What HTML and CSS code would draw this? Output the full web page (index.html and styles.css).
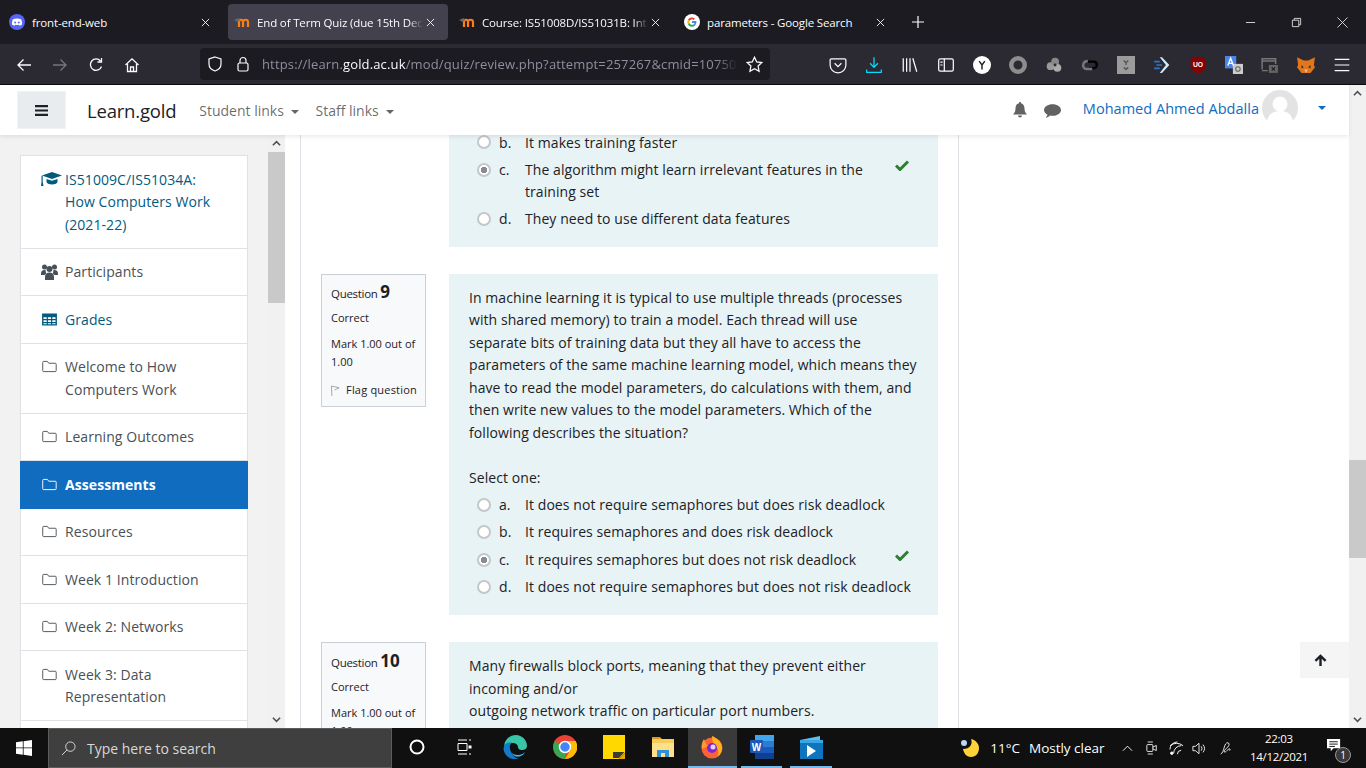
FILE: index.html
```html
<!DOCTYPE html>
<html lang="en">
<head>
<meta charset="utf-8">
<title>End of Term Quiz</title>
<link rel="stylesheet" href="styles.css">
</head>
<body>
<div class="tabbar">
  <div class="tab">
    <svg class="fav" viewBox="0 0 16 16"><circle cx="8" cy="8" r="8" fill="#5865f2"/><path d="M4 5.300c2.400-1.200 5.600-1.200 8 0 .9 1.800 1.200 3.600 1 5.200-1 .8-1.800 1.100-2.500 1.200l-.6-1c-1.200.3-2.600.3-3.800 0l-.6 1c-.7-.1-1.500-.4-2.500-1.200-.2-1.600.1-3.400 1-5.200z" fill="#fff"/><circle cx="6.200" cy="8.400" r="1" fill="#5865f2"/><circle cx="9.800" cy="8.400" r="1" fill="#5865f2"/></svg>
    <span class="tab-title">front-end-web</span>
    <svg class="tab-x" viewBox="0 0 10 10"><path d="M1 1l8 8M9 1l-8 8"/></svg>
  </div>
  <div class="tab tab-active">
    <svg class="fav" viewBox="0 0 16 16"><path d="M5 13V8c0-3 4-3 4 0v5M9 13V8c0-3 5-3 5 0v5" fill="none" stroke="#f98012" stroke-width="2.200"/><path d="M0 6l5-2 1 2-2 2z" fill="#6b6b6b"/></svg>
    <span class="tab-title tab-fade">End of Term Quiz (due 15th Dec</span>
    <svg class="tab-x" viewBox="0 0 10 10"><path d="M1 1l8 8M9 1l-8 8"/></svg>
  </div>
  <div class="tab">
    <svg class="fav" viewBox="0 0 16 16"><path d="M5 13V8c0-3 4-3 4 0v5M9 13V8c0-3 5-3 5 0v5" fill="none" stroke="#f98012" stroke-width="2.200"/><path d="M0 6l5-2 1 2-2 2z" fill="#6b6b6b"/></svg>
    <span class="tab-title tab-fade">Course: IS51008D/IS51031B: Intro</span>
    <svg class="tab-x" viewBox="0 0 10 10"><path d="M1 1l8 8M9 1l-8 8"/></svg>
  </div>
  <div class="tab">
    <svg class="fav" viewBox="0 0 16 16"><circle cx="8" cy="8" r="8" fill="#fff"/><path d="M8 3.500a4.500 4.500 0 0 1 3 1.200l-1.300 1.300A2.700 2.700 0 0 0 5.500 7L3.900 5.800A4.500 4.500 0 0 1 8 3.500z" fill="#ea4335"/><path d="M3.900 5.800L5.500 7a2.700 2.700 0 0 0 0 2L3.900 10.200a4.500 4.500 0 0 1 0-4.400z" fill="#fbbc05"/><path d="M3.900 10.200L5.500 9a2.700 2.700 0 0 0 4.100 1.300l1.500 1.200A4.500 4.500 0 0 1 3.900 10.200z" fill="#34a853"/><path d="M8 7.100h4.400c.2 1.700-.3 3.300-1.300 4.400L9.600 10.300c.5-.4.800-.8 1-1.400H8z" fill="#4285f4"/></svg>
    <span class="tab-title">parameters - Google Search</span>
    <svg class="tab-x" viewBox="0 0 10 10"><path d="M1 1l8 8M9 1l-8 8"/></svg>
  </div>
  <svg class="plus" viewBox="0 0 12 12"><path d="M6 0v12M0 6h12"/></svg>
  <div class="winctl">
    <svg viewBox="0 0 12 12"><path d="M1 6h10"/></svg>
    <svg viewBox="0 0 12 12"><path d="M1.500 3.500h7v7h-7zM3.500 3.500v-2h7v7h-2"/></svg>
    <svg viewBox="0 0 12 12"><path d="M.5.5l11 11M11.500.5l-11 11"/></svg>
  </div>
</div>

<div class="toolbar">
  <div class="nav-icons">
    <svg viewBox="0 0 16 16"><path d="M15 8H2M7.500 2.500L2 8l5.500 5.500"/></svg>
    <svg class="dim" viewBox="0 0 16 16"><path d="M1 8h13M8.500 2.500L14 8l-5.500 5.500"/></svg>
    <svg viewBox="0 0 16 16"><path d="M13.500 9.500A5.700 5.700 0 1 1 12.500 4M13.500 1v4h-4"/></svg>
    <svg viewBox="0 0 16 16"><path d="M1.500 8L8 1.800 14.500 8M3.500 7v7.500h9V7M6.500 14.500V10h3v4.500"/></svg>
  </div>
  <div class="urlbar">
    <svg class="url-ic" viewBox="0 0 16 16"><path d="M8 1l6 2v5c0 3.500-3 6-6 7-3-1-6-3.500-6-7V3z"/></svg>
    <svg class="url-ic" viewBox="0 0 16 16"><rect x="3" y="7" width="10" height="8" rx="1.500"/><path d="M5 7V4.500a3 3 0 0 1 6 0V7"/></svg>
    <span class="url">https://learn.<b>gold.ac.uk</b>/mod/quiz/review.php?attempt=257267&amp;cmid=10750</span>
    <svg class="url-star" viewBox="0 0 16 16"><path d="M8 1.200l2.100 4.400 4.800.6-3.500 3.300.9 4.800L8 12l-4.300 2.300.9-4.800L1.100 6.200l4.800-.6z"/></svg>
  </div>
  <div class="ext-icons">
    <svg viewBox="0 0 16 16"><path d="M2 2.500h12a1 1 0 0 1 1 1V8a7 7 0 0 1-14 0V3.500a1 1 0 0 1 1-1zM5 6.500l3 3 3-3" class="ln"/></svg>
    <svg viewBox="0 0 16 16"><path d="M8 1v9M4.500 6.500L8 10l3.500-3.500M1.500 12v2.500h13V12" class="ln cy"/></svg>
    <svg viewBox="0 0 16 16"><path d="M2 2v12M5 2v12M8 2v12M10.500 2l3.500 12" class="ln"/></svg>
    <svg viewBox="0 0 16 16"><rect x="1.500" y="2.500" width="13" height="11" rx="1.500" class="ln"/><path d="M6.500 2.500v11M3 5.500h2M3 8h2" class="ln"/></svg>
    <svg viewBox="0 0 16 16"><circle cx="8" cy="8" r="8" fill="#fff"/><path d="M5.500 4.500L8 8l2.500-3.500M8 8v4" fill="none" stroke="#222" stroke-width="1.300"/></svg>
    <svg viewBox="0 0 16 16"><circle cx="8" cy="8" r="6" fill="none" stroke="#8d8d8d" stroke-width="4"/></svg>
    <svg viewBox="0 0 16 16"><circle cx="5" cy="9" r="3.500" fill="#999"/><circle cx="9" cy="5" r="3.500" fill="#888"/><circle cx="11" cy="10.500" r="3.500" fill="#aaa"/><circle cx="9" cy="8" r="1.300" fill="#2b2a33"/></svg>
    <svg viewBox="0 0 16 16"><path d="M6 5h6a3 3 0 0 1 2 3.500c-.5 2-2 2.500-4 2.500H7" fill="none" stroke="#000" stroke-width="2.200"/><path d="M10 11.500H5a3 3 0 0 1-3-4c.5-2 2-3 4-3" fill="none" stroke="#777" stroke-width="2.200"/></svg>
    <svg viewBox="0 0 16 16"><rect width="16" height="16" fill="#9b9b9b"/><path d="M6 4l2 2 2-2M6 10l2 2 2-2M8 6v2" fill="none" stroke="#555" stroke-width="1.200"/></svg>
    <svg viewBox="0 0 16 16"><path d="M8 1L14.500 8 8 15H6L11.500 8 6 1z" fill="#cfe8ff"/><path d="M1 5h5M3 8h5M1 11h5" stroke="#2f76c6" stroke-width="1.500"/></svg>
    <svg viewBox="0 0 16 16"><path d="M8 .5l6.500 2V9c0 3-3 5.500-6.500 6.500C4.500 14.500 1.500 12 1.500 9V2.500z" fill="#800"/><text x="8" y="9.800" class="ub">UO</text></svg>
    <svg viewBox="0 0 16 16"><rect width="10" height="11" fill="#4a86e8"/><rect x="7" y="7" width="9" height="9" fill="#ccc"/><path d="M2.500 8.500L5 2l2.500 6.500M3.500 6.500h3" fill="none" stroke="#fff" stroke-width="1.200"/><circle cx="11.500" cy="11.500" r="2" fill="none" stroke="#666"/></svg>
    <svg viewBox="0 0 16 16"><path d="M1 12V2.500h12V7M1 4.500h12M6 13H1" fill="none" stroke="#777" stroke-width="1.300"/><rect x="7" y="8" width="8" height="7" fill="#666"/><path d="M9.500 10l3 3M12.500 10l-3 3" stroke="#222"/></svg>
    <svg viewBox="0 0 16 16"><path d="M0 1l6 3h4l6-3-1 7 1 2-4 5H8.500h-1H4L0 10l1-2z" fill="#e2761b"/><path d="M4 8l2 2-2 1zM12 8l-2 2 2 1z" fill="#233447"/><path d="M6.500 12h3L8 15z" fill="#d7c1b3"/></svg>
    <svg class="menu" viewBox="0 0 16 16"><path d="M1.500 3h13M1.500 8h13M1.500 13h13" class="ln"/></svg>
  </div>
</div>

<div class="viewport">
  <div class="page">
    <div class="navbar">
      <button class="burger" type="button"><svg viewBox="0 0 12 10"><path d="M0 1h12M0 5h12M0 9h12"/></svg></button>
      <span class="brand">Learn.gold</span>
      <span class="navlink">Student links <i class="caret"></i></span>
      <span class="navlink">Staff links <i class="caret"></i></span>
      <div class="nav-right">
        <svg class="nav-ic" viewBox="0 0 16 16"><path d="M8 0a1 1 0 0 1 1 1.200C11.500 1.800 12.500 4 12.500 6.500c0 3 1 4.500 2.500 6H1c1.500-1.500 2.500-3 2.500-6C3.500 4 4.500 1.800 7 1.200A1 1 0 0 1 8 0zM6 13.500h4a2 2 0 0 1-4 0z"/></svg>
        <svg class="nav-ic msg" viewBox="0 0 16 16"><path d="M8 2c4.400 0 8 2.400 8 5.500S12.400 13 8 13c-.8 0-1.500-.1-2.200-.2C4.700 14 3 14.800 1.500 15c1-1 1.500-2 1.700-3.200C1.200 10.800 0 9.200 0 7.500 0 4.400 3.600 2 8 2z"/></svg>
        <span class="username">Mohamed Ahmed Abdalla</span>
        <svg class="avatar" viewBox="0 0 36 36"><circle cx="18" cy="18" r="18" fill="#e3e3e3"/><circle cx="18" cy="14" r="7.500" fill="#fff"/><path d="M5 31c2-8 7-10 13-10s11 2 13 10a18 18 0 0 1-26 0z" fill="#fff"/></svg>
        <i class="caret caret-blue"></i>
      </div>
    </div>

    <div class="below">
      <aside class="side">
        <nav class="side-list">
          <a class="item link"><svg class="ic ic-cap" viewBox="0 0 21 14"><path d="M11 0L1 3.500 11 7l10-3.500zM5.500 7v2.800c0 1.600 2.500 2.700 5.500 2.700s5.500-1.100 5.500-2.700V7L11 8.800zM.5 3.800h1.200V10l.8 4H0l.5-4z" fill="#005b7f"/></svg><span>IS51009C/IS51034A:<br>How Computers Work<br>(2021-22)</span></a>
          <a class="item"><svg class="ic ic-users" viewBox="0 0 17 16"><circle cx="3.500" cy="3" r="2.500"/><circle cx="13.500" cy="3" r="2.500"/><circle cx="8.500" cy="5" r="3"/><path d="M0 10c0-3 1.200-4 3.500-4 .7 0 1 .2 1.300.4-.3 1.100-.1 2.100.5 3L3.500 11H0zM17 10c0-3-1.200-4-3.500-4-.7 0-1 .2-1.300.4.300 1.100.1 2.100-.5 3l1.800 1.600H17zM4 13c0-3 1.800-4.500 4.500-4.500S13 10 13 13v3H4z"/></svg><span>Participants</span></a>
          <a class="item link"><svg class="ic ic-grid" viewBox="0 0 16 14"><path fill-rule="evenodd" d="M0 .5h16v13H0zM1.500 4.500v2h3.500v-2zM6.300 4.500v2h3.400v-2zM11 4.500v2h3.500v-2zM1.500 7.800v2h3.500v-2zM6.300 7.800v2h3.400v-2zM11 7.800v2h3.500v-2zM1.500 11v1.200h3.500V11zM6.300 11v1.200h3.400V11zM11 11v1.200h3.500V11z" fill="#005b7f"/></svg><span>Grades</span></a>
          <a class="item"><svg class="ic folder" viewBox="0 0 16 14"><path d="M.7 11.500V2.500a1 1 0 0 1 1-1h4l1.500 2h7a1 1 0 0 1 1 1v7a1 1 0 0 1-1 1h-12.500a1 1 0 0 1-1-1z"/></svg><span>Welcome to How Computers Work</span></a>
          <a class="item"><svg class="ic folder" viewBox="0 0 16 14"><path d="M.7 11.500V2.500a1 1 0 0 1 1-1h4l1.500 2h7a1 1 0 0 1 1 1v7a1 1 0 0 1-1 1h-12.500a1 1 0 0 1-1-1z"/></svg><span>Learning Outcomes</span></a>
          <a class="item active"><svg class="ic folder" viewBox="0 0 16 14"><path d="M.7 11.500V2.500a1 1 0 0 1 1-1h4l1.500 2h7a1 1 0 0 1 1 1v7a1 1 0 0 1-1 1h-12.500a1 1 0 0 1-1-1z"/></svg><span>Assessments</span></a>
          <a class="item"><svg class="ic folder" viewBox="0 0 16 14"><path d="M.7 11.500V2.500a1 1 0 0 1 1-1h4l1.500 2h7a1 1 0 0 1 1 1v7a1 1 0 0 1-1 1h-12.500a1 1 0 0 1-1-1z"/></svg><span>Resources</span></a>
          <a class="item"><svg class="ic folder" viewBox="0 0 16 14"><path d="M.7 11.500V2.500a1 1 0 0 1 1-1h4l1.500 2h7a1 1 0 0 1 1 1v7a1 1 0 0 1-1 1h-12.500a1 1 0 0 1-1-1z"/></svg><span>Week 1 Introduction</span></a>
          <a class="item"><svg class="ic folder" viewBox="0 0 16 14"><path d="M.7 11.500V2.500a1 1 0 0 1 1-1h4l1.500 2h7a1 1 0 0 1 1 1v7a1 1 0 0 1-1 1h-12.500a1 1 0 0 1-1-1z"/></svg><span>Week 2: Networks</span></a>
          <a class="item"><svg class="ic folder" viewBox="0 0 16 14"><path d="M.7 11.500V2.500a1 1 0 0 1 1-1h4l1.500 2h7a1 1 0 0 1 1 1v7a1 1 0 0 1-1 1h-12.500a1 1 0 0 1-1-1z"/></svg><span>Week 3: Data Representation</span></a>
        </nav>
      </aside>
      <div class="scroll side-scroll">
        <svg class="arrow" viewBox="0 0 10 6"><path d="M1 5l4-4 4 4"/></svg>
        <div class="track"><div class="thumb thumb-side"></div></div>
        <svg class="arrow" viewBox="0 0 10 6"><path d="M1 1l4 4 4-4"/></svg>
      </div>

      <main class="main">
        <section class="q q-first">
          <div class="info-slot"></div>
          <div class="content">
            <div class="opt"><i class="radio"></i><span class="ol">b.</span><span class="ot">It makes training faster</span></div>
            <div class="opt opt-two"><i class="radio on"></i><span class="ol">c.</span><span class="ot">The algorithm might learn irrelevant features in the training set</span><svg class="tick" viewBox="0 0 14 11"><path d="M1 5.500L5 9.500 13 1.500"/></svg></div>
            <div class="opt"><i class="radio"></i><span class="ol">d.</span><span class="ot">They need to use different data features</span></div>
          </div>
        </section>

        <section class="q">
          <div class="info">
            <div class="qno">Question <b>9</b></div>
            <div class="state">Correct</div>
            <div class="grade">Mark 1.00 out of 1.00</div>
            <div class="flag"><svg viewBox="0 0 10 12"><path d="M1 12L.5 1 9 3 4 5.500"/></svg>Flag question</div>
          </div>
          <div class="content content-q">
            <p class="qtext">In machine learning it is typical to use multiple threads (processes with shared memory) to train a model. Each thread will use<br>separate bits of training data but they all have to access the<br>parameters of the same machine learning model, which means they<br>have to read the model parameters, do calculations with them, and<br>then write new values to the model parameters. Which of the<br>following describes the situation?</p>
            <p class="prompt">Select one:</p>
            <div class="opt"><i class="radio"></i><span class="ol">a.</span><span class="ot">It does not require semaphores but does risk deadlock</span></div>
            <div class="opt"><i class="radio"></i><span class="ol">b.</span><span class="ot">It requires semaphores and does risk deadlock</span></div>
            <div class="opt"><i class="radio on"></i><span class="ol">c.</span><span class="ot">It requires semaphores but does not risk deadlock</span><svg class="tick" viewBox="0 0 14 11"><path d="M1 5.500L5 9.500 13 1.500"/></svg></div>
            <div class="opt"><i class="radio"></i><span class="ol">d.</span><span class="ot">It does not require semaphores but does not risk deadlock</span></div>
          </div>
        </section>

        <section class="q q-last">
          <div class="info">
            <div class="qno">Question <b>10</b></div>
            <div class="state">Correct</div>
            <div class="grade">Mark 1.00 out of 1.00</div>
          </div>
          <div class="content content-q">
            <p class="qtext">Many firewalls block ports, meaning that they prevent either<br>incoming and/or<br>outgoing network traffic on particular port numbers.</p>
          </div>
        </section>
      </main>
      <div class="right-gap">
        <button class="totop" type="button"><svg viewBox="0 0 14 14"><path d="M7 13V2M1.500 7.500L7 2l5.500 5.500"/></svg></button>
      </div>
    </div>
  </div>
  <div class="scroll main-scroll">
    <svg class="arrow" viewBox="0 0 10 6"><path d="M1 5l4-4 4 4"/></svg>
    <div class="track"><div class="thumb thumb-main"></div></div>
    <svg class="arrow" viewBox="0 0 10 6"><path d="M1 1l4 4 4-4"/></svg>
  </div>
</div>

<footer class="taskbar">
  <svg class="start" viewBox="0 0 16 16"><path d="M0 2.300l6.800-1v6.200H0zM7.600 1.200L16 0v7.500H7.600zM0 8.300h6.800v6.400L0 13.700zM7.600 8.300H16V16l-8.400-1.200z" fill="#fff"/></svg>
  <div class="search">
    <svg viewBox="0 0 16 16"><circle cx="10" cy="6" r="5"/><path d="M6.500 9.500L1 15"/></svg>
    <span>Type here to search</span>
  </div>
  <div class="tb-apps">
    <span class="app"><svg viewBox="0 0 16 16"><circle cx="8" cy="8" r="6.500" fill="none" stroke="#fff" stroke-width="2"/></svg></span>
    <span class="app"><svg viewBox="0 0 16 16"><path d="M2 1h9M2 15h9M2 4.500h9v7H2zM13 1h2M13 15h2" fill="none" stroke="#fff"/><rect x="12.500" y="6.500" width="3" height="3" fill="#fff"/></svg></span>
    <span class="app"><svg viewBox="0 0 24 24"><path d="M1 11C2 4 7 0 13 0c6 0 11 5 11 11 0 3-3 4.500-6 4-2.500-.5-3-2-3-3 0-2-2-4-5-4-4 0-8 1-9 3z" fill="#39c5a8"/><path d="M1 11c1-3 5-4 8.500-3.500C6.500 9 6 13 8 17c1.500 3 4 6 8 7-9 2-15-4-15.500-10z" fill="#1379c9"/><path d="M18 21c-4 2-8 0-10-4 1 2 4 3 7 3 3 0 5-1 7-3-1 2-2 3-4 4z" fill="#3fb5e8"/></svg></span>
    <span class="app"><svg viewBox="0 0 24 24"><circle cx="12" cy="12" r="12" fill="#ea4335"/><path d="M12 12L1.600 6.500A12 12 0 0 0 12 24z" fill="#34a853"/><path d="M12 6h10.600A12 12 0 0 1 12 24l6-10z" fill="#fbbc05"/><circle cx="12" cy="12" r="5.500" fill="#4285f4" stroke="#fff" stroke-width="1.500"/></svg></span>
    <span class="app"><svg viewBox="0 0 24 24"><path d="M1 0h22v18l-6 6H1z" fill="#ffd800"/><path d="M11 23V17h11.500L17 23z" fill="#3b3a36"/><path d="M17 24h6v-6z" fill="#e9a600"/></svg></span>
    <span class="app"><svg viewBox="0 0 24 24"><path d="M1 2h8l2 2H1z" fill="#d99a1e"/><rect x="1" y="4" width="22" height="18" fill="#f6cc5a"/><rect x="1" y="8" width="22" height="14" fill="#ffe08a"/><path d="M6 15h12v7H6z" fill="#2f8fd8"/><path d="M10 18h4v4h-4z" fill="#ffe08a"/></svg></span>
    <span class="app app-cur"><svg viewBox="0 0 24 24"><circle cx="12" cy="13" r="10.500" fill="#ff6136"/><path d="M12 1c5 2 10 6 10 12 0 4-2 7-5 9 3-5 1-10-3-11-1-3-2-7-2-10z" fill="#ffb31a"/><path d="M4 4c-2 3-3 6-2 10l6-3c-2-2-3-4-4-7z" fill="#ff9a2e"/><circle cx="12" cy="13" r="5" fill="#7a2bd0"/><circle cx="13" cy="12" r="2.500" fill="#e8cdfa"/></svg></span>
    <span class="app app-open"><svg viewBox="0 0 24 24"><rect x="5" width="19" height="24" rx="1" fill="#2b7cd3"/><rect x="5" y="12" width="19" height="6" fill="#185abd"/><rect x="5" y="18" width="19" height="6" fill="#103f91"/><rect x="5" width="19" height="6" fill="#41a5ee"/><rect y="5" width="13" height="13" rx="1" fill="#1b59b5"/><text x="6.500" y="15.500" class="wd">W</text></svg></span>
    <span class="app app-open"><svg viewBox="0 0 24 24"><path d="M1 5L21 1v4z" fill="#5cc0ef"/><rect x="1" y="7" width="23" height="17" fill="#0e74bd"/><rect x="1" y="5" width="23" height="3" fill="#39a7e5"/><path d="M8 10l9 6-9 6z" fill="#fff"/></svg></span>
  </div>
  <div class="tray">
    <svg class="moon" viewBox="0 0 20 20"><path d="M11 1c2 5-1 10-8 10 1 5 4 8 8 8 5 0 8-4 8-9 0-4-3-8-8-9z" fill="#ffd23a"/><circle cx="4" cy="5" r="3" fill="#bcd6f3"/></svg>
    <span class="temp">11°C</span>
    <span class="sky">Mostly clear</span>
    <svg class="tr-ic chev" viewBox="0 0 12 8"><path d="M1 7l5-5 5 5"/></svg>
    <svg class="tr-ic cam" viewBox="0 0 14 16"><rect x="1" y="4" width="7" height="8" rx="1"/><path d="M8 7l4-2v6l-4-2M2 1h6M2 15h6"/></svg>
    <svg class="tr-ic wifi" viewBox="0 0 16 16"><path d="M1 9a8 8 0 0 1 8-8M1 5.500a8 8 0 0 0 0 0M5 13a8 8 0 0 1 8-8M9 14a4 4 0 0 1 4-4M1 5a11 11 0 0 1 14 0"/><circle cx="3" cy="13" r="1.300" fill="#fff"/></svg>
    <svg class="tr-ic vol" viewBox="0 0 16 16"><path d="M1 5.500h3L8 2v12l-4-3.500H1zM10.500 5.500a4 4 0 0 1 0 5M12.500 3.500a7 7 0 0 1 0 9"/></svg>
    <svg class="tr-ic pen" viewBox="0 0 16 16"><path d="M2 15c2-1 3-4 4-8 1-3 2-5 4-5 2 0 2 3 0 5-2 2-4 3-4 5 0 1 1 1 2 0 2-2 3-3 4-3s1 1 0 2"/></svg>
    <div class="clock"><span>22:03</span><span>14/12/2021</span></div>
    <div class="notif">
      <svg viewBox="0 0 16 16"><path d="M0 1h14v10H7l-3 3v-3H0z" fill="#fff"/><path d="M2.500 4h9M2.500 6.500h9M2.500 9h6" stroke="#111"/></svg>
      <span class="badge">1</span>
    </div>
  </div>
</footer>
</body>
</html>
```
FILE: styles.css
```css
* { box-sizing: border-box; }
html, body { margin: 0; height: 100%; overflow: hidden; }
body {
  width: 1366px; height: 768px; display: flex; flex-direction: column;
  font-family: "Open Sans", "Noto Sans", sans-serif; color: #1d2125; background: #fff;
}
svg { display: block; flex: none; }

/* tabs */
.tabbar { height: 44px; flex: none; background: #1c1b22; display: flex; align-items: center; padding-left: 3px; color: #fbfbfe; }
.tab { width: 220px; height: 36px; flex: none; display: flex; align-items: center; padding: 0 13px 0 6px; margin-right: 5px; border-radius: 4px; }
.tab-active { background: #42414d; }
.fav { width: 16px; height: 16px; margin-right: 7px; }
.tab-title { flex: 1; min-width: 0; white-space: nowrap; overflow: hidden; font-size: 11.500px; letter-spacing: -.15px; }
.tab-fade { -webkit-mask-image: linear-gradient(to left, transparent, #000 14px); mask-image: linear-gradient(to left, transparent, #000 14px); }
.tab-x { width: 9px; height: 9px; margin-left: 3px; stroke: #fbfbfe; fill: none; stroke-width: 1; }
.plus { width: 12px; height: 12px; margin-left: 9px; stroke: #fbfbfe; fill: none; stroke-width: 1.200; }
.winctl { margin-left: auto; display: flex; gap: 35px; padding-right: 18px; }
.winctl svg { width: 11px; height: 11px; stroke: #ddd; fill: none; stroke-width: 1; }

/* toolbar */
.toolbar { height: 41px; flex: none; background: #2b2a33; border-bottom: 1px solid #0c0c0d; display: flex; align-items: center; }
.nav-icons { width: 200px; flex: none; display: flex; padding-left: 16px; gap: 20px; margin-top: 1px; }
.nav-icons svg { width: 16px; height: 16px; fill: none; stroke: #fbfbfe; stroke-width: 1.300; }
.nav-icons .dim { stroke: #77767d; }
.urlbar { width: 570px; height: 32px; flex: none; background: #1c1b22; border-radius: 4px; display: flex; align-items: center; padding: 0 7px; color: #8f8f9d; }
.url-ic { width: 16px; height: 16px; fill: none; stroke: #fbfbfe; stroke-width: 1.200; margin-right: 12px; }
.url { flex: 1; min-width: 0; overflow: hidden; white-space: nowrap; font-size: 13px; letter-spacing: .15px; margin-left: -1px; -webkit-mask-image: linear-gradient(to left, transparent 4px, #000 26px); mask-image: linear-gradient(to left, transparent 4px, #000 26px); }
.url b { color: #fbfbfe; font-weight: 400; }
.url-star { width: 17px; height: 17px; fill: none; stroke: #fbfbfe; stroke-width: 1.200; margin-left: 4px; }
.ext-icons { flex: 1; display: flex; padding-left: 59px; gap: 18px; align-items: center; margin-top: 1px; }
.ext-icons svg { width: 18px; height: 18px; }
.ext-icons .ln { fill: none; stroke: #fbfbfe; stroke-width: 1.100; }
.ext-icons .cy { stroke: #00ddff; }
.ub { font: 700 6px "Liberation Sans", sans-serif; fill: #fff; text-anchor: middle; }

/* page */
.viewport { flex: 1; min-height: 0; display: flex; }
.page { flex: 1; min-width: 0; display: flex; flex-direction: column; }
.navbar { height: 50px; flex: none; display: flex; align-items: center; padding-left: 17px; background: #fff; box-shadow: 0 2px 4px rgba(0,0,0,.08); position: relative; z-index: 2; }
.burger { width: 49px; height: 38px; background: #e9ecef; border: 1px solid #f2f3f5; display: flex; align-items: center; justify-content: center; padding: 0; }
.burger svg { width: 13px; height: 11px; stroke: #1d2125; stroke-width: 2; }
.brand { font-size: 18.500px; margin-left: 21px; margin-right: 23px; color: #1d2125; letter-spacing: -.2px; }
.navlink { font-size: 14px; color: rgba(0,0,0,.6); margin-right: 16px; white-space: nowrap; }
.caret { display: inline-block; border: 4px solid transparent; border-top-color: rgba(0,0,0,.6); border-bottom: 0; margin-left: 4px; vertical-align: 2px; }
.nav-right { margin-left: auto; display: flex; align-items: center; padding-right: 23px; margin-top: -4px; }
.nav-ic { width: 16px; height: 16px; fill: #626262; margin-right: 16px; margin-top: 4px; }
.nav-ic.msg { width: 17px; height: 17px; margin-right: 22px; }
.username { font-size: 14.500px; letter-spacing: .03px; color: #0f6cbf; white-space: nowrap; }
.avatar { width: 36px; height: 36px; margin-left: 3px; }
.caret-blue { border-top-color: #0f6cbf; margin-left: 20px; }

.below { flex: 1; min-height: 0; display: flex; background: #fff; }
.side { width: 268px; flex: none; background: #f2f2f2; padding: 20px 20px 0; overflow: hidden; display: flex; }
.side-list { width: 228px; background: #fff; border: solid #dee2e6; border-width: 1px 1px 0; display: flex; flex-direction: column; }
.item { display: flex; padding: 12.500px 16px 11.500px 21px; border-bottom: 1px solid #dee2e6; font-size: 14px; letter-spacing: .07px; line-height: 22.500px; color: #495057; }
.item.link { color: #005b7f; }
.item.active { background: #0f6cbf; color: #fff; font-weight: 700; margin: 0 -1px; padding-left: 22px; border-bottom-color: #0f6cbf; }
.ic { fill: #495057; margin-top: 3px; }
.ic-cap { width: 21px; height: 14px; margin-left: -1px; margin-right: 3px; }
.ic-users { width: 17px; height: 16px; margin-left: -1px; margin-right: 7px; }
.ic-grid { width: 15px; height: 13px; margin-top: 4px; margin-right: 8px; }
.folder { fill: none; stroke: #495057; stroke-width: 1; width: 15px; height: 13px; margin: 4px 8px 0 0; }
.active .folder { stroke: #fff; }

.scroll { width: 17px; flex: none; background: #f1f1f1; display: flex; flex-direction: column; align-items: center; }
.arrow { width: 9px; height: 17px; padding: 5px 0; fill: none; stroke: #505050; stroke-width: 1.800; flex: none; }
.track { flex: 1; width: 100%; min-height: 0; }
.thumb { background: #c9c9c9; width: 100%; }
.thumb-side { height: 151px; }
.thumb-main { height: 98px; margin-top: 358px; }

.main { width: 659px; flex: none; margin-left: 15px; border: solid #dee2e6; border-width: 0 1px; padding: 0 20px; overflow: hidden; display: flex; flex-direction: column; gap: 27px; }
.q { display: flex; gap: 23px; flex: none; }
.info { width: 105px; flex: none; background: #f8f9fa; border: 1px solid #cad0d7; padding: 6.500px 8px 6.500px 9px; font-size: 11px; line-height: 18px; color: #1d2125; align-self: flex-start; }
.info-slot { width: 105px; flex: none; }
.qno { font-size: 11.500px; letter-spacing: -.3px; line-height: 22px; }
.qno b { font-size: 17px; font-weight: 700; letter-spacing: 0; }
.state { margin-top: 4px; }
.grade { margin-top: 8px; }
.flag { margin-top: 10px; display: flex; align-items: center; white-space: nowrap; letter-spacing: .2px; }
.flag svg { width: 9px; height: 11px; margin-right: 6px; fill: none; stroke: #888; stroke-width: .8; }
.content { width: 489px; flex: none; background: #e7f3f5; padding: 0 20px; font-size: 14px; letter-spacing: .07px; line-height: 22.500px; color: #1d2125; }
.q-first .content { padding-bottom: 14px; }
.q-first .opt:first-child { min-height: 21.250px; padding-top: 0; line-height: 16px; }
.q-first .opt:first-child .radio { margin-top: 0; }
.content-q { padding-top: 13px; padding-bottom: 14px; }
.q-last .grade { margin-top: 8.500px; }
.qtext { margin: 0 0 22.500px; }
.prompt { margin: 0 0 2px; }
.opt { display: flex; align-items: flex-start; min-height: 27.500px; padding-top: 2.500px; position: relative; }
.opt-two { min-height: 49px; }
.opt-two .ot { max-width: 345px; }
.radio { width: 14px; height: 14px; flex: none; border-radius: 50%; background: #fff; border: 2px solid #c4c7cb; margin: 4px 8px 0 8px; }
.radio.on { background: radial-gradient(circle, #8a8d90 0 3px, #fff 3.500px); }
.ol { width: 26px; flex: none; }
.ot { flex: 1; white-space: normal; }
.tick { position: absolute; right: 9px; top: 0; width: 14px; height: 11px; fill: none; stroke: #2e7d32; stroke-width: 3; margin-top: 4px; }

.right-gap { flex: 1; position: relative; }
.totop { position: absolute; right: 0; top: 507px; width: 49px; height: 36px; background: #f5f5f5; border: 0; display: flex; align-items: center; justify-content: center; padding: 0 9px 0 0; }
.totop svg { width: 13px; height: 13px; fill: none; stroke: #1d2125; stroke-width: 2.600; }

/* taskbar */
.taskbar { height: 40px; flex: none; background: #101010; display: flex; align-items: center; color: #fff; }
.start { width: 16px; height: 16px; margin-left: 16px; }
.search { width: 344px; height: 40px; margin-left: 16px; background: #3f3f3f; border: 1px solid #5c5c5c; display: flex; align-items: center; padding-left: 12px; font-size: 14px; color: #d8d8d8; }
.search svg { width: 15px; height: 15px; fill: none; stroke: #ddd; stroke-width: 1; margin-right: 11px; }
.tb-apps { display: flex; }
.app { width: 49.300px; height: 40px; display: flex; align-items: center; justify-content: center; border-bottom: 2px solid transparent; }
.app svg { width: 24px; height: 24px; }
.app:nth-child(1) svg, .app:nth-child(2) svg { width: 16px; height: 16px; }
.app:nth-child(2) svg { margin-right: 3px; }
.app-open { border-bottom-color: #76b9ed; margin: 0 4px; width: 41.300px; }
.app-cur { background: #3a3a3a; border-bottom-color: #76b9ed; }
.wd { font: 700 10px "Liberation Sans", sans-serif; fill: #fff; text-anchor: middle; }
.tray { margin-left: auto; display: flex; align-items: center; height: 40px; }
.moon { width: 20px; height: 20px; margin-right: 10px; }
.temp, .sky { font-size: 13.500px; white-space: nowrap; }
.sky { margin-left: 9px; margin-right: 18px; letter-spacing: -.02px; }
.tr-ic { fill: none; stroke: #fff; stroke-width: 1; }
.chev { height: 8px; width: 11px; margin-right: 12.500px; }
.cam { width: 12px; height: 16px; margin-right: 11px; }
.wifi { width: 15px; height: 15px; margin-right: 8px; }
.vol { width: 14px; height: 15px; margin-right: 13px; }
.pen { width: 14px; height: 16px; margin-right: 17px; }
.clock { display: flex; flex-direction: column; align-items: center; font-size: 11.500px; line-height: 18px; margin-right: 19px; letter-spacing: -.3px; }
.notif { position: relative; width: 24px; height: 24px; margin-right: 15px; }
.notif svg { width: 15px; height: 15px; margin-top: 2px; }
.badge { position: absolute; right: 0; bottom: -3px; width: 16px; height: 16px; border-radius: 50%; background: #3a3a3a; border: 1px solid #999; font-size: 10px; line-height: 14px; text-align: center; }
```
